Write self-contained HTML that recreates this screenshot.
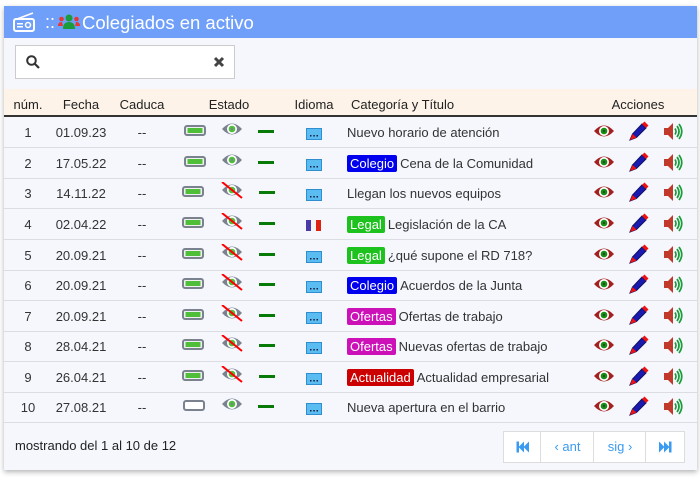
<!DOCTYPE html>
<html><head><meta charset="utf-8"><style>
body{margin:0;width:700px;height:480px;background:#fff;font-family:"Liberation Sans",Arial,sans-serif;position:relative;overflow:hidden}
.card{position:absolute;left:4px;top:6px;width:693px;height:464px;background:#f5f7fd;box-shadow:0 2px 5px rgba(0,0,0,.3)}
.hd{position:absolute;left:0;top:0;width:693px;height:32px;background:#6f9ff8;color:#fff;font-size:18px}
.srch{position:absolute;left:11px;top:39px;width:218px;height:32px;background:#fff;border:1px solid #ccc}
.th{position:absolute;left:0;top:83px;width:693px;height:26px;background:#fdf3e9;border-bottom:2px solid #333;font-size:13px;color:#222}
.r{position:absolute;left:0;width:693px;height:30px;border-bottom:1px solid #dcdde2;font-size:13px;color:#333}
.r span,.th span{position:absolute;top:8px;white-space:nowrap}
.c{transform:translateX(-50%)}
.r svg{position:absolute}
.b{color:#fff;padding:1px 3px;border-radius:2px;margin-right:3px}
.pg{position:absolute;top:425px;height:30px;background:#fff;border:1px solid #ddd;color:#3a9bf0;font-size:13px;text-align:center;line-height:30px}
.pg svg{position:absolute;left:50%;top:50%;transform:translate(-50%,-50%)}
</style></head><body>
<svg width="0" height="0" style="position:absolute"><defs>
<g id="bat"><rect x="1" y="1" width="20" height="9" rx="2" fill="#f0f0f0" stroke="#7a8290" stroke-width="2"/><rect x="3.5" y="3" width="15" height="5" fill="#4fbf3a"/></g>
<g id="bate"><rect x="1" y="1" width="20" height="9" rx="2" fill="#fff" stroke="#7a8290" stroke-width="2"/></g>
<g id="eye"><path d="M1 8Q11-3 21 8Q11 19 1 8Z" fill="#7a8290"/><circle cx="11" cy="8" r="5" fill="#fff"/><circle cx="11" cy="8" r="3.3" fill="#4fbf3a"/><circle cx="11" cy="8" r="1.2" fill="#7a8290"/></g>
<g id="eyex"><use href="#eye"/><line x1="1" y1="0" x2="21" y2="16" stroke="#f00" stroke-width="2"/></g>
<g id="dash"><rect x="0" y="0" width="16" height="3" fill="#087a08"/></g>
<g id="msg"><rect x="0.5" y="0.5" width="15" height="11" fill="#5bbcf2" stroke="#2d8fd0"/><rect x="4" y="7" width="1.5" height="1.5" fill="#124"/><rect x="7.3" y="7" width="1.5" height="1.5" fill="#124"/><rect x="10.5" y="7" width="1.5" height="1.5" fill="#124"/></g>
<g id="fr"><rect x="0" y="0" width="5" height="11" fill="#4a3aa8"/><rect x="5" y="0" width="5" height="11" fill="#f4f4f4"/><rect x="10" y="0" width="5" height="11" fill="#d21"/></g>
<g id="reye"><path d="M1 8Q11-3 21 8Q11 19 1 8Z" fill="#a32020"/><circle cx="11" cy="8" r="5" fill="#fff"/><circle cx="11" cy="8" r="3.3" fill="#159015"/><circle cx="11" cy="8" r="1" fill="#333"/></g>
<g id="pen"><path d="M2 19L4.5 13L14 3L18 7L8.5 16.5Z" fill="#1a1ab0" stroke="#101060" stroke-width="1"/><path d="M14 3L16.5 0.5L20.5 4.5L18 7Z" fill="#e11"/><path d="M2 19L4.5 13L8.5 16.5Z" fill="#e11"/></g>
<g id="spk"><path d="M1 6H5L10 1V18L5 13H1Z" fill="#c0392b"/><path d="M12 6.5Q14 9.5 12 12.5M14 4Q18 9.5 14 15M16 2Q21.5 9.5 16 17" fill="none" stroke="#1a9c3a" stroke-width="1.7"/></g>
</defs></svg>
<div class="card">
<div class="hd">
<svg style="position:absolute;left:9px;top:5px" width="22" height="22" viewBox="0 0 22 22"><rect x="1" y="8" width="20" height="12" rx="2" fill="none" stroke="#fff" stroke-width="2"/><line x1="4" y1="8" x2="20" y2="2" stroke="#fff" stroke-width="1.6"/><rect x="4" y="12" width="6" height="1.5" fill="#fff"/><rect x="4" y="15" width="6" height="1.5" fill="#fff"/><circle cx="15" cy="14" r="2.5" fill="none" stroke="#fff" stroke-width="1.5"/></svg>
<span style="position:absolute;left:41px;top:6px">::</span>
<svg style="position:absolute;left:54px;top:8px" width="22" height="16" viewBox="0 0 22 16"><circle cx="11" cy="4" r="3.5" fill="#1a9c3a"/><path d="M5 15Q5 8 11 8Q17 8 17 15Z" fill="#1a9c3a"/><circle cx="3.5" cy="5" r="2.3" fill="#e53935"/><circle cx="18.5" cy="5" r="2.3" fill="#e53935"/><path d="M0 12Q0 8 4 8L5 12Z" fill="#e53935"/><path d="M22 12Q22 8 18 8L17 12Z" fill="#e53935"/></svg>
<span style="position:absolute;left:78px;top:6px;font-size:18.5px">Colegiados en activo</span>
</div>
<div class="srch">
<svg style="position:absolute;left:10px;top:9px" width="14" height="14" viewBox="0 0 14 14"><circle cx="5.5" cy="5.5" r="4.3" fill="none" stroke="#333" stroke-width="2"/><line x1="8.5" y1="8.5" x2="13" y2="13" stroke="#333" stroke-width="2.2"/></svg>
<svg style="position:absolute;left:197px;top:10px" width="12" height="12" viewBox="0 0 12 12"><path d="M2 2L10 10M10 2L2 10" stroke="#444" stroke-width="3"/></svg>
</div>
<div class="th">
<span class="c" style="left:24px">núm.</span><span class="c" style="left:77px">Fecha</span><span class="c" style="left:138px">Caduca</span><span class="c" style="left:225px">Estado</span><span class="c" style="left:310px">Idioma</span><span style="left:347px">Categoría y Título</span><span class="c" style="left:634px">Acciones</span>
</div>

<div class="r" style="top:111px"><span class="c" style="left:24px">1</span><span class="c" style="left:77px">01.09.23</span><span class="c" style="left:138px">--</span><svg style="left:180px;top:8px" width="22" height="11"><use href="#bat"/></svg><svg style="left:217px;top:4px" width="22" height="17"><use href="#eye"/></svg><svg style="left:254px;top:13px" width="16" height="3"><use href="#dash"/></svg><svg style="left:302px;top:11px" width="16" height="12"><use href="#msg"/></svg><span style="left:343px">Nuevo horario de atención</span><svg style="left:589px;top:6px" width="22" height="17"><use href="#reye"/></svg><svg style="left:624px;top:4px" width="21" height="20"><use href="#pen"/></svg><svg style="left:659px;top:5px" width="22" height="20"><use href="#spk"/></svg></div>

<div class="r" style="top:142px"><span class="c" style="left:24px">2</span><span class="c" style="left:77px">17.05.22</span><span class="c" style="left:138px">--</span><svg style="left:180px;top:8px" width="22" height="11"><use href="#bat"/></svg><svg style="left:217px;top:4px" width="22" height="17"><use href="#eye"/></svg><svg style="left:254px;top:13px" width="16" height="3"><use href="#dash"/></svg><svg style="left:302px;top:11px" width="16" height="12"><use href="#msg"/></svg><span style="left:343px"><b class="b" style="background:#0000ee;font-weight:normal">Colegio</b>Cena de la Comunidad</span><svg style="left:589px;top:6px" width="22" height="17"><use href="#reye"/></svg><svg style="left:624px;top:4px" width="21" height="20"><use href="#pen"/></svg><svg style="left:659px;top:5px" width="22" height="20"><use href="#spk"/></svg></div>

<div class="r" style="top:172px"><span class="c" style="left:24px">3</span><span class="c" style="left:77px">14.11.22</span><span class="c" style="left:138px">--</span><svg style="left:178px;top:8px" width="22" height="11"><use href="#bat"/></svg><svg style="left:217px;top:4px" width="22" height="17"><use href="#eyex"/></svg><svg style="left:255px;top:13px" width="16" height="3"><use href="#dash"/></svg><svg style="left:302px;top:11px" width="16" height="12"><use href="#msg"/></svg><span style="left:343px">Llegan los nuevos equipos</span><svg style="left:589px;top:6px" width="22" height="17"><use href="#reye"/></svg><svg style="left:624px;top:4px" width="21" height="20"><use href="#pen"/></svg><svg style="left:659px;top:5px" width="22" height="20"><use href="#spk"/></svg></div>

<div class="r" style="top:203px"><span class="c" style="left:24px">4</span><span class="c" style="left:77px">02.04.22</span><span class="c" style="left:138px">--</span><svg style="left:178px;top:8px" width="22" height="11"><use href="#bat"/></svg><svg style="left:217px;top:4px" width="22" height="17"><use href="#eyex"/></svg><svg style="left:255px;top:13px" width="16" height="3"><use href="#dash"/></svg><svg style="left:302px;top:11px" width="15" height="11"><use href="#fr"/></svg><span style="left:343px"><b class="b" style="background:#1ec21e;font-weight:normal">Legal</b>Legislación de la CA</span><svg style="left:589px;top:6px" width="22" height="17"><use href="#reye"/></svg><svg style="left:624px;top:4px" width="21" height="20"><use href="#pen"/></svg><svg style="left:659px;top:5px" width="22" height="20"><use href="#spk"/></svg></div>

<div class="r" style="top:234px"><span class="c" style="left:24px">5</span><span class="c" style="left:77px">20.09.21</span><span class="c" style="left:138px">--</span><svg style="left:178px;top:8px" width="22" height="11"><use href="#bat"/></svg><svg style="left:217px;top:4px" width="22" height="17"><use href="#eyex"/></svg><svg style="left:255px;top:13px" width="16" height="3"><use href="#dash"/></svg><svg style="left:302px;top:11px" width="16" height="12"><use href="#msg"/></svg><span style="left:343px"><b class="b" style="background:#1ec21e;font-weight:normal">Legal</b>¿qué supone el RD 718?</span><svg style="left:589px;top:6px" width="22" height="17"><use href="#reye"/></svg><svg style="left:624px;top:4px" width="21" height="20"><use href="#pen"/></svg><svg style="left:659px;top:5px" width="22" height="20"><use href="#spk"/></svg></div>

<div class="r" style="top:264px"><span class="c" style="left:24px">6</span><span class="c" style="left:77px">20.09.21</span><span class="c" style="left:138px">--</span><svg style="left:178px;top:8px" width="22" height="11"><use href="#bat"/></svg><svg style="left:217px;top:4px" width="22" height="17"><use href="#eyex"/></svg><svg style="left:255px;top:13px" width="16" height="3"><use href="#dash"/></svg><svg style="left:302px;top:11px" width="16" height="12"><use href="#msg"/></svg><span style="left:343px"><b class="b" style="background:#0000ee;font-weight:normal">Colegio</b>Acuerdos de la Junta</span><svg style="left:589px;top:6px" width="22" height="17"><use href="#reye"/></svg><svg style="left:624px;top:4px" width="21" height="20"><use href="#pen"/></svg><svg style="left:659px;top:5px" width="22" height="20"><use href="#spk"/></svg></div>

<div class="r" style="top:295px"><span class="c" style="left:24px">7</span><span class="c" style="left:77px">20.09.21</span><span class="c" style="left:138px">--</span><svg style="left:178px;top:8px" width="22" height="11"><use href="#bat"/></svg><svg style="left:217px;top:4px" width="22" height="17"><use href="#eyex"/></svg><svg style="left:255px;top:13px" width="16" height="3"><use href="#dash"/></svg><svg style="left:302px;top:11px" width="16" height="12"><use href="#msg"/></svg><span style="left:343px"><b class="b" style="background:#cc11b8;font-weight:normal">Ofertas</b>Ofertas de trabajo</span><svg style="left:589px;top:6px" width="22" height="17"><use href="#reye"/></svg><svg style="left:624px;top:4px" width="21" height="20"><use href="#pen"/></svg><svg style="left:659px;top:5px" width="22" height="20"><use href="#spk"/></svg></div>

<div class="r" style="top:325px"><span class="c" style="left:24px">8</span><span class="c" style="left:77px">28.04.21</span><span class="c" style="left:138px">--</span><svg style="left:178px;top:8px" width="22" height="11"><use href="#bat"/></svg><svg style="left:217px;top:4px" width="22" height="17"><use href="#eyex"/></svg><svg style="left:255px;top:13px" width="16" height="3"><use href="#dash"/></svg><svg style="left:302px;top:11px" width="16" height="12"><use href="#msg"/></svg><span style="left:343px"><b class="b" style="background:#cc11b8;font-weight:normal">Ofertas</b>Nuevas ofertas de trabajo</span><svg style="left:589px;top:6px" width="22" height="17"><use href="#reye"/></svg><svg style="left:624px;top:4px" width="21" height="20"><use href="#pen"/></svg><svg style="left:659px;top:5px" width="22" height="20"><use href="#spk"/></svg></div>

<div class="r" style="top:356px"><span class="c" style="left:24px">9</span><span class="c" style="left:77px">26.04.21</span><span class="c" style="left:138px">--</span><svg style="left:178px;top:8px" width="22" height="11"><use href="#bat"/></svg><svg style="left:217px;top:4px" width="22" height="17"><use href="#eyex"/></svg><svg style="left:255px;top:13px" width="16" height="3"><use href="#dash"/></svg><svg style="left:302px;top:11px" width="16" height="12"><use href="#msg"/></svg><span style="left:343px"><b class="b" style="background:#cc0000;font-weight:normal">Actualidad</b>Actualidad empresarial</span><svg style="left:589px;top:6px" width="22" height="17"><use href="#reye"/></svg><svg style="left:624px;top:4px" width="21" height="20"><use href="#pen"/></svg><svg style="left:659px;top:5px" width="22" height="20"><use href="#spk"/></svg></div>

<div class="r" style="top:386px"><span class="c" style="left:24px">10</span><span class="c" style="left:77px">27.08.21</span><span class="c" style="left:138px">--</span><svg style="left:179px;top:8px" width="22" height="11"><use href="#bate"/></svg><svg style="left:217px;top:4px" width="22" height="17"><use href="#eye"/></svg><svg style="left:254px;top:13px" width="16" height="3"><use href="#dash"/></svg><svg style="left:302px;top:11px" width="16" height="12"><use href="#msg"/></svg><span style="left:343px">Nueva apertura en el barrio</span><svg style="left:589px;top:6px" width="22" height="17"><use href="#reye"/></svg><svg style="left:624px;top:4px" width="21" height="20"><use href="#pen"/></svg><svg style="left:659px;top:5px" width="22" height="20"><use href="#spk"/></svg></div>

<span style="position:absolute;left:11px;top:432px;font-size:13px;color:#222">mostrando del 1 al 10 de 12</span>
<div class="pg" style="left:499px;width:37px"><svg width="13" height="11" viewBox="0 0 13 11"><rect x="0" y="0" width="2.5" height="11" fill="#3a9bf0"/><path d="M2 5.5L7.5 0V11Z M7 5.5L12.5 0V11Z" fill="#3a9bf0"/></svg></div>
<div class="pg" style="left:536px;width:53px">‹ ant</div>
<div class="pg" style="left:589px;width:52px">sig ›</div>
<div class="pg" style="left:641px;width:38px"><svg width="13" height="11" viewBox="0 0 13 11"><rect x="10.5" y="0" width="2.5" height="11" fill="#3a9bf0"/><path d="M11 5.5L5.5 0V11Z M6 5.5L0.5 0V11Z" fill="#3a9bf0"/></svg></div>
</div>
</body></html>
